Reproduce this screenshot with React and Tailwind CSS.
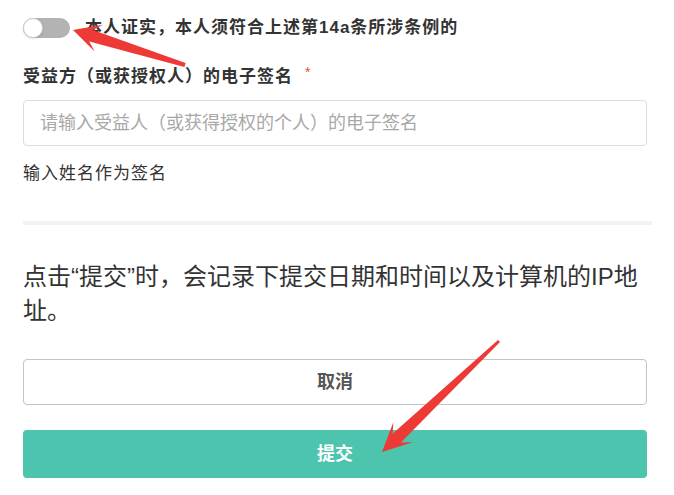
import React from 'react';

// Builds a tapered markup arrow (tail -> tip) as polygon points
const arrowPoints = (tx, ty, px, py, headLen, headW, neckW, tailW) => {
    const dx = px - tx;
    const dy = py - ty;
    const len = Math.hypot(dx, dy);
    const ux = dx / len;
    const uy = dy / len;
    const nx = -uy;
    const ny = ux;
    const bx = px - ux * headLen;
    const by = py - uy * headLen;
    const kx = px - ux * headLen * 0.7;
    const ky = py - uy * headLen * 0.7;
    const pts = [
        [tx + nx * tailW, ty + ny * tailW],
        [kx + nx * neckW, ky + ny * neckW],
        [bx + nx * headW, by + ny * headW],
        [px, py],
        [bx - nx * headW, by - ny * headW],
        [kx - nx * neckW, ky - ny * neckW],
        [tx - nx * tailW, ty - ny * tailW],
    ];
    return pts.map(([x, y]) => `${x.toFixed(1)},${y.toFixed(1)}`).join(' ');
};

const font = { fontFamily: '"Liberation Sans", "Noto Sans CJK SC", sans-serif' };

const App = () => {
    return (
        <div className="relative w-[674px] h-[495px] bg-white overflow-hidden text-[#333]" style={font}>
            <div className="flex flex-col pl-[23px] w-[650px]">
                {/* Consent toggle */}
                <div className="flex items-center h-[20px] mt-[18px]">
                    <div className="relative w-[47px] h-[20px] rounded-full bg-[#b3b3b3]">
                        <div className="absolute left-0 top-0 w-[20px] h-[20px] rounded-full bg-white border border-[#d0d0d0] shadow-sm"></div>
                    </div>
                    <span className="ml-[15px] text-[17px] leading-[20px] font-bold tracking-[1px]">
                        本人证实，本人须符合上述第14a条所涉条例的
                    </span>
                </div>

                {/* Signature field */}
                <div className="mt-[27px] h-[24px] flex items-start text-[17px] leading-[24px] font-bold tracking-[1px]">
                    受益方（或获授权人）的电子签名
                    <span className="ml-[12px] text-[#e84c3d] text-[14px] leading-[14px] font-normal">*</span>
                </div>
                <div className="mt-[11px] w-[624px] h-[46px] border border-[#dcdcdc] rounded-[4px] flex items-center px-[16px]">
                    <span className="text-[18px] text-[#a8a8a8]">请输入受益人（或获得授权的个人）的电子签名</span>
                </div>
                <div className="mt-[16px] text-[17px] leading-[24px] tracking-[1px]">输入姓名作为签名</div>

                <div className="mt-[35px] w-[629px] h-[4px] bg-[#f3f3f3]"></div>

                <p className="mt-[35px] w-[626px] text-[24px] leading-[34px]">
                    点击“提交”时，会记录下提交日期和时间以及计算机的IP地址。
                </p>

                {/* Actions */}
                <button className="mt-[31px] w-[624px] h-[46px] border-[1.5px] border-[#c4c4c4] rounded-[4px] bg-white text-[18px] font-bold text-[#555]">
                    取消
                </button>
                <button className="mt-[25px] w-[624px] h-[48px] rounded-[4px] bg-[#4cc4ae] text-[18px] font-bold text-white">
                    提交
                </button>
            </div>

            {/* Annotation arrows */}
            <svg className="absolute inset-0 pointer-events-none" width="674" height="495" viewBox="0 0 674 495">
                <polygon points={arrowPoints(185, 65, 73, 30, 27, 14, 6, 2)} fill="#ee3a36" />
                <polygon points={arrowPoints(499, 341, 382, 452, 29, 14, 6, 1.5)} fill="#ee3a36" />
            </svg>
        </div>
    );
};

export default App;
